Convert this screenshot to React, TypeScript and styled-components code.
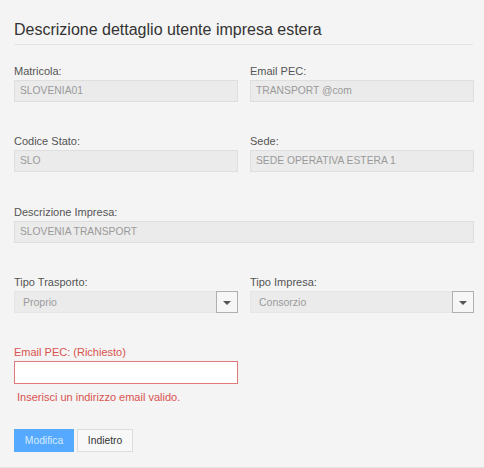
import React from "react";
import styled, { createGlobalStyle } from "styled-components";

const Global = createGlobalStyle`
  html, body { margin: 0; padding: 0; background: #f4f4f4; }
  body { font-family: "Liberation Sans", Arial, sans-serif; }
`;

const Page = styled.div`
  width: 484px;
  height: 468px;
  box-sizing: border-box;
  padding: 18px 11px 0 14px;
  background: #f4f4f4;
  border-bottom: 1px solid #e2e2e2;
  display: flex;
  flex-direction: column;
`;

const Title = styled.h1`
  margin: 0;
  font-size: 16px;
  font-weight: normal;
  color: #333;
  line-height: 24px;
  padding-bottom: 2px;
  border-bottom: 1px solid #e4e4e4;
`;

const Row = styled.div<{ $top: number }>`
  display: grid;
  grid-template-columns: 224px 224px;
  column-gap: 12px;
  margin-top: ${(p) => p.$top}px;
`;

const Field = styled.div<{ $wide?: boolean }>`
  display: flex;
  flex-direction: column;
  grid-column: ${(p) => (p.$wide ? "1 / span 2" : "auto")};
`;

const Label = styled.label<{ $error?: boolean }>`
  font-size: 11px;
  line-height: 14px;
  color: ${(p) => (p.$error ? "#d9534f" : "#555")};
  margin-bottom: 2px;
`;

const ReadOnly = styled.div`
  height: 22px;
  box-sizing: border-box;
  border: 1px solid #dedede;
  background: #ebebeb;
  color: #9a9a9a;
  font-size: 10.3px;
  line-height: 20px;
  padding: 0 5px;
  white-space: nowrap;
  overflow: hidden;
`;

const Select = styled.div`
  height: 22px;
  box-sizing: border-box;
  display: flex;
  background: #ebebeb;
  border: 1px solid #e6e6e6;
`;

const SelectValue = styled.div`
  flex: 1;
  color: #9a9a9a;
  font-size: 10.5px;
  line-height: 20px;
  padding: 0 8px;
`;

const SelectButton = styled.div`
  width: 20px;
  margin: -1px -1px -1px 0;
  border: 1px solid #b0b0b0;
  background: #f6f6f6;
  display: flex;
  align-items: center;
  justify-content: center;
`;

const Arrow = styled.span`
  width: 0;
  height: 0;
  margin-top: 1px;
  border-left: 4px solid transparent;
  border-right: 4px solid transparent;
  border-top: 4px solid #555;
`;

const TextInput = styled.input`
  height: 23px;
  width: 224px;
  box-sizing: border-box;
  border: 1px solid #e07a78;
  background: #fff;
  outline: none;
  padding: 0 5px;
  font-family: inherit;
  font-size: 11px;
`;

const ErrorText = styled.div`
  color: #d9534f;
  font-size: 11px;
  line-height: 14px;
  margin: 6px 0 0 3px;
`;

const Buttons = styled.div`
  display: flex;
  gap: 3px;
  margin-top: 25px;
`;

const Button = styled.button<{ $primary?: boolean }>`
  height: 23px;
  box-sizing: border-box;
  font-family: inherit;
  font-size: 10.3px;
  padding: 0;
  width: ${(p) => (p.$primary ? 60 : 56)}px;
  border: 1px solid ${(p) => (p.$primary ? "#55aaff" : "#dcdcdc")};
  background: ${(p) => (p.$primary ? "#55aaff" : "#f8f8f8")};
  color: ${(p) => (p.$primary ? "#d6ebff" : "#333")};
  cursor: pointer;
`;

export default function App() {
  return (
    <>
      <Global />
      <Page>
        <Title>Descrizione dettaglio utente impresa estera</Title>
        <Row $top={19}>
          <Field>
            <Label>Matricola:</Label>
            <ReadOnly>SLOVENIA01</ReadOnly>
          </Field>
          <Field>
            <Label>Email PEC:</Label>
            <ReadOnly>TRANSPORT @com</ReadOnly>
          </Field>
        </Row>
        <Row $top={32}>
          <Field>
            <Label>Codice Stato:</Label>
            <ReadOnly>SLO</ReadOnly>
          </Field>
          <Field>
            <Label>Sede:</Label>
            <ReadOnly>SEDE OPERATIVA ESTERA 1</ReadOnly>
          </Field>
        </Row>
        <Row $top={33}>
          <Field $wide>
            <Label>Descrizione Impresa:</Label>
            <ReadOnly>SLOVENIA TRANSPORT</ReadOnly>
          </Field>
        </Row>
        <Row $top={32}>
          <Field>
            <Label>Tipo Trasporto:</Label>
            <Select>
              <SelectValue>Proprio</SelectValue>
              <SelectButton>
                <Arrow />
              </SelectButton>
            </Select>
          </Field>
          <Field>
            <Label>Tipo Impresa:</Label>
            <Select>
              <SelectValue>Consorzio</SelectValue>
              <SelectButton>
                <Arrow />
              </SelectButton>
            </Select>
          </Field>
        </Row>
        <Row $top={32}>
          <Field>
            <Label $error>Email PEC: (Richiesto)</Label>
            <TextInput />
          </Field>
        </Row>
        <ErrorText>Inserisci un indirizzo email valido.</ErrorText>
        <Buttons>
          <Button $primary>Modifica</Button>
          <Button>Indietro</Button>
        </Buttons>
      </Page>
    </>
  );
}
